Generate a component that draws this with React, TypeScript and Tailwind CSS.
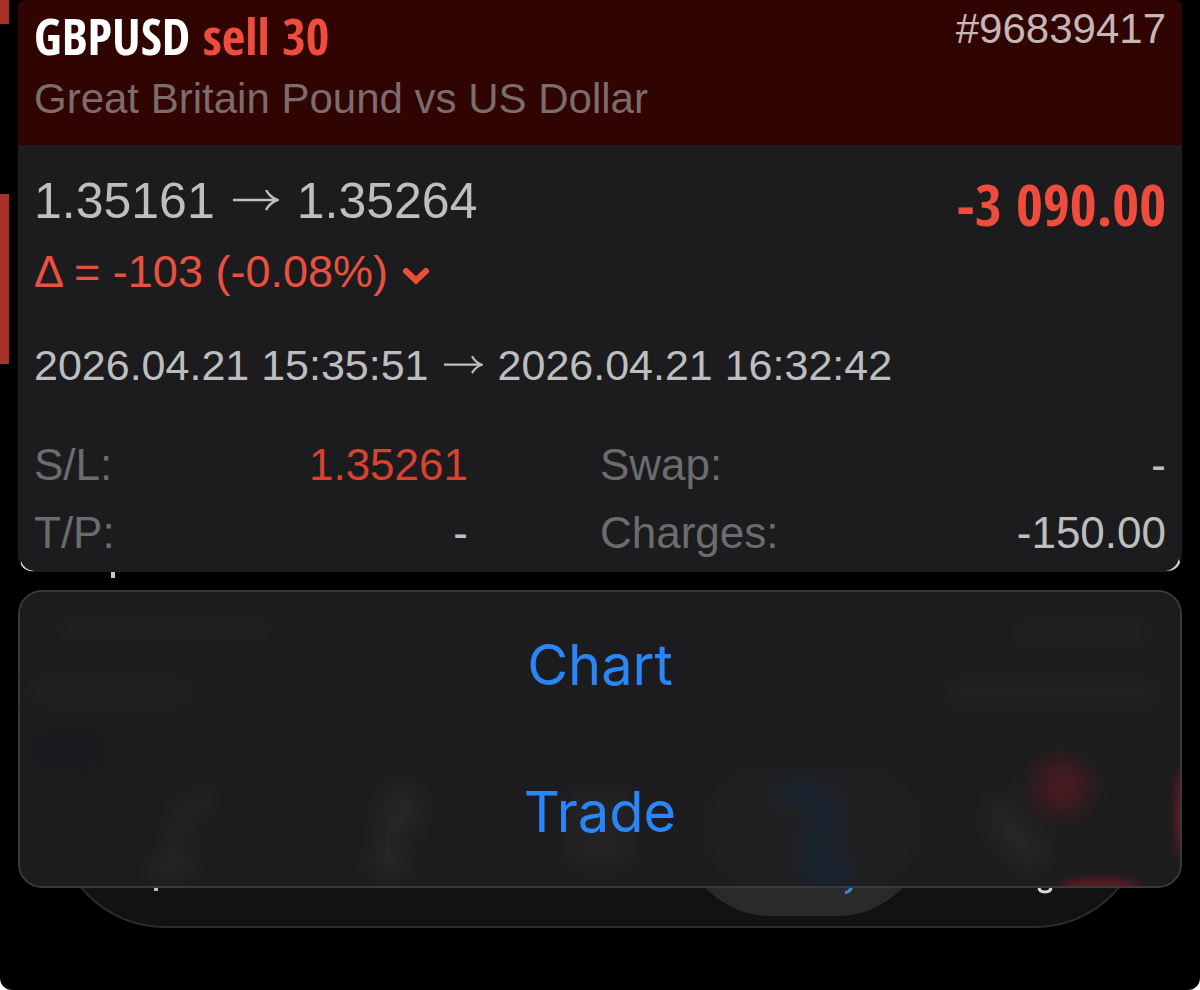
const narrow =
  "font-['Avenir_Next_Condensed','Open_Sans_Condensed','Liberation_Sans_Narrow',sans-serif]";

function Arrow({ className }: { className: string }) {
  return (
    <svg
      viewBox="0 0 46 22"
      className={className}
      fill="none"
      stroke="currentColor"
      strokeWidth="2.500"
      role="img"
      aria-label="to"
    >
      <path d="M0 10h44M33 0c2.500 4.500 6 8 11.500 10c-5.500 2-9 5.500-11.500 10" />
    </svg>
  );
}

function Row({
  label,
  value,
  valueClass = "text-[#bebec0]",
}: {
  label: string;
  value: string;
  valueClass?: string;
}) {
  return (
    <div className="flex justify-between">
      <dt className="text-[#6c6c6e]">{label}</dt>
      <dd className={valueClass}>{value}</dd>
    </div>
  );
}

// blurred tab bar showing through the sheet
function Backdrop() {
  return (
    <svg
      viewBox="0 0 1164 298"
      preserveAspectRatio="none"
      className="absolute inset-0 h-full w-full"
      aria-hidden="true"
    >
      <defs>
        <filter
          id="soft"
          x="-10%"
          y="-20%"
          width="120%"
          height="140%"
          colorInterpolationFilters="sRGB"
        >
          <feGaussianBlur stdDeviation="11" />
        </filter>
        <filter
          id="tight"
          x="-50%"
          y="-50%"
          width="200%"
          height="200%"
          colorInterpolationFilters="sRGB"
        >
          <feGaussianBlur stdDeviation="5" />
        </filter>
      </defs>
      <g filter="url(#soft)">
        <rect x="-60" y="-60" width="1284" height="418" fill="#1c1c1e" />
        <rect x="40" y="30" width="210" height="16" fill="#222224" />
        <rect x="10" y="92" width="160" height="18" fill="#232325" />
        <rect x="1000" y="32" width="130" height="18" fill="#232325" />
        <rect x="930" y="92" width="210" height="20" fill="#232325" />
        <rect x="22" y="148" width="50" height="24" fill="#19191f" />
        <rect x="690" y="180" width="210" height="118" rx="50" fill="#202022" />
        <path d="M194 206l-32 18l-4 40l-20 18h36" stroke="#272729" strokeWidth="14" fill="none" />
        <path d="M364 208h26v26h-20v44h-16h34" stroke="#29292b" strokeWidth="18" fill="none" />
        <rect x="550" y="200" width="64" height="80" fill="#232325" />
        <path d="M765 208q40-14 44 20q-10 24-4 36l18 24h-36" stroke="#162638" strokeWidth="16" fill="none" />
        <path d="M996 214q-14 14 0 34l30 26" stroke="#262628" strokeWidth="34" fill="none" />
        <circle cx="1045" cy="197" r="28" fill="#461b20" />
      </g>
      <g filter="url(#tight)">
        <ellipse cx="1166" cy="226" rx="6" ry="44" fill="#6c1a24" />
        <ellipse cx="1084" cy="300" rx="40" ry="9" fill="#641a22" />
      </g>
    </svg>
  );
}

function TabBar() {
  return (
    <div className="-mt-[120px] mx-[55px] grid h-[160px] grid-cols-5 rounded-b-[110px] border-2 border-[#2c2c2c] bg-[#121212] px-[33px] pb-[10px]">
      <div className="relative">
        <span className="absolute bottom-[25px] left-[64px] h-[3px] w-1 bg-[#bebec0]" />
      </div>
      <div />
      <div />
      <div className="relative -mx-[21px] rounded-b-[90px] bg-[#2a2a2a]">
        <svg
          viewBox="0 0 12 12"
          className="absolute bottom-[21px] left-[162px] h-3 w-3"
          fill="none"
          stroke="#3a8be0"
          strokeWidth="3"
        >
          <path d="M2 9.500c4 0 5.500-2 7-6" />
        </svg>
      </div>
      <div className="relative">
        <svg
          viewBox="0 0 16 12"
          className="absolute bottom-[22px] left-[131px] h-3 w-4"
          fill="none"
          stroke="#d8d8d8"
          strokeWidth="3"
        >
          <path d="M2 5c0 3.500 2 5 6 5s6-1.500 6-5" />
        </svg>
      </div>
    </div>
  );
}

export default function App() {
  return (
    <div className="bg-white">
      <div className="relative min-h-screen overflow-hidden rounded-b-xl bg-black px-[18px] font-['Liberation_Sans',Arial,sans-serif]">
        <span className="absolute left-0 top-0 h-6 w-[9px] bg-[#a83228]" />
        <span className="absolute left-0 top-[194px] h-[170px] w-[9px] bg-[#a83228]" />

        <main className="relative overflow-hidden rounded-b-[16px] rounded-t-lg bg-[#1c1c1e]">
          <header className="flex justify-between bg-[#300400] px-4 pb-[13px] pt-1">
            <div>
              <h1 className={`${narrow} text-[51px] font-bold leading-[62px] text-white`}>
                GBPUSD <span className="text-[#f04c3e]">sell 30</span>
              </h1>
              <p className="text-[42px] leading-[66px] text-[#7c6c6c]">
                Great Britain Pound vs US Dollar
              </p>
            </div>
            <p className="text-[42px] leading-[50px] text-[#c6b6b6]">#96839417</p>
          </header>

          <section className="px-4 pb-[5px] pt-6 text-[#bebec0]">
            <div className="flex h-16 items-start justify-between">
              <p className="flex items-center text-[50px] leading-[64px]">
                1.35161
                <Arrow className="mx-[18px] h-[22px] w-[46px]" />
                1.35264
              </p>
              <p className={`${narrow} text-[58px] font-bold leading-[70px] text-[#f04c3e]`}>
                -3 090.00
              </p>
            </div>
            <p className="flex items-center gap-[14px] text-[45px] leading-[78px] text-[#e9503f]">
              Δ = -103 (-0.08%)
              <svg
                viewBox="0 0 28 20"
                className="mt-2 h-5 w-7"
                fill="none"
                stroke="#f04c3a"
                strokeWidth="6"
                strokeLinecap="round"
                aria-hidden="true"
              >
                <path d="M4 5l10 9.500l10-9.500" />
              </svg>
            </p>
            <p className="mt-[22px] flex items-center text-[43px] leading-[64px]">
              2026.04.21 15:35:51
              <Arrow className="mx-[15px] h-[19px] w-[39px]" />
              2026.04.21 16:32:42
            </p>
            <div className="mt-[34px] grid grid-cols-2 text-[44px] leading-[68px]">
              <dl className="pr-[132px]">
                <Row label="S/L:" value="1.35261" valueClass="text-[#d8432f]" />
                <Row label="T/P:" value="-" />
              </dl>
              <dl>
                <Row label="Swap:" value="-" />
                <Row label="Charges:" value="-150.00" />
              </dl>
            </div>
          </section>

          <svg viewBox="0 0 16 16" className="absolute bottom-0 left-0 h-4 w-4" aria-hidden="true">
            <path d="M3 5q3 9 13 10q-9 1-13-6z" fill="#d8d8d8" />
          </svg>
          <svg viewBox="0 0 16 16" className="absolute bottom-0 right-0 h-4 w-4" aria-hidden="true">
            <path d="M13 3q-3 10-13 12q9 1 14-8z" fill="#d8d8d8" />
          </svg>
        </main>

        <div className="h-[18px] pl-[93px]">
          <div className="h-[6px] w-1 bg-[#c8c8c8]" />
        </div>

        <div className="relative z-10 overflow-hidden rounded-3xl border-2 border-[#39393b] bg-[#1c1c1e]">
          <Backdrop />
          <div className="relative flex flex-col font-[Inter,sans-serif] text-[56px] leading-[147px] text-[#2a86f8]">
            <button type="button">Chart</button>
            <button type="button">Trade</button>
          </div>
        </div>

        <div className="-mx-[18px]">
          <TabBar />
        </div>
      </div>
    </div>
  );
}
